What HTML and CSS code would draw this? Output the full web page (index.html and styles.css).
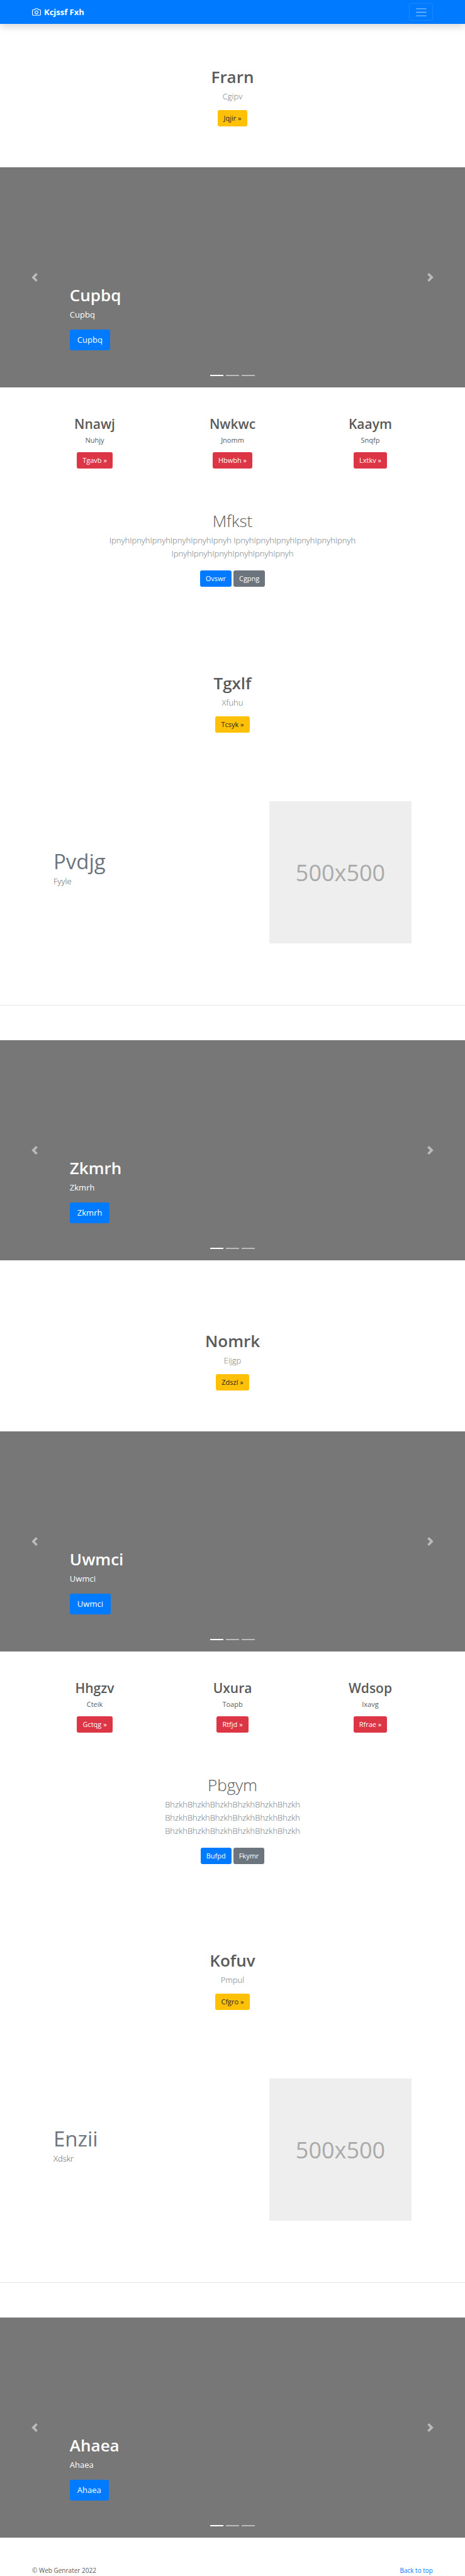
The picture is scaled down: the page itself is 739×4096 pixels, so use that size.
FILE: index.html
```html
<!DOCTYPE html>
<html lang="en">
<head>
<meta charset="utf-8">
<meta name="viewport" content="width=device-width, initial-scale=1">
<title>Kcjssf Fxh</title>
<link rel="stylesheet" href="styles.css">
</head>
<body>
<svg class="sprite" aria-hidden="true">
  <symbol id="chevron-left" viewBox="0 0 8 8"><path d="M5.25 0l-4 4 4 4 1.5-1.5L4.25 4l2.5-2.5L5.25 0z"/></symbol>
  <symbol id="chevron-right" viewBox="0 0 8 8"><path d="M2.75 0l-1.5 1.5L3.75 4l-2.5 2.5L2.75 8l4-4-4-4z"/></symbol>
</svg>

<header class="navbar" id="top">
  <div class="container navbar-inner">
    <a class="brand" href="#">
      <svg class="brand-icon" viewBox="0 0 24 24" aria-hidden="true"><path d="M23 19a2 2 0 0 1-2 2H3a2 2 0 0 1-2-2V8a2 2 0 0 1 2-2h4l2-3h6l2 3h4a2 2 0 0 1 2 2z"/><circle cx="12" cy="13" r="4"/></svg>
      <strong>Kcjssf Fxh</strong>
    </a>
    <button class="toggler" type="button" aria-label="Toggle navigation">
      <svg class="toggler-icon" viewBox="0 0 30 30" aria-hidden="true"><path d="M4 7h22M4 15h22M4 23h22"/></svg>
    </button>
  </div>
</header>

<main>
  <section class="hero">
    <h1 class="title">Frarn</h1>
    <p class="lead muted">Cgipv</p>
    <a class="btn btn-warning" href="#">Jqjir »</a>
  </section>

  <section class="carousel">
    <button class="control" type="button" aria-label="Previous"><svg><use href="#chevron-left"/></svg></button>
    <div class="caption">
      <h1 class="title">Cupbq</h1>
      <p class="lead">Cupbq</p>
      <a class="btn btn-lg btn-primary" href="#">Cupbq</a>
    </div>
    <button class="control" type="button" aria-label="Next"><svg><use href="#chevron-right"/></svg></button>
    <ol class="indicators"><li class="active"></li><li></li><li></li></ol>
  </section>

  <section class="container columns">
    <div class="column"><h2>Nnawj</h2><p>Nuhjy</p><a class="btn btn-danger" href="#">Tgavb »</a></div>
    <div class="column"><h2>Nwkwc</h2><p>Jnomm</p><a class="btn btn-danger" href="#">Hbwbh »</a></div>
    <div class="column"><h2>Kaaym</h2><p>Snqfp</p><a class="btn btn-danger" href="#">Lxtkv »</a></div>
  </section>

  <section class="intro">
    <h1 class="title light">Mfkst</h1>
    <p class="lead muted">IpnyhIpnyhIpnyhIpnyhIpnyhIpnyh IpnyhIpnyhIpnyhIpnyhIpnyhIpnyh IpnyhIpnyhIpnyhIpnyhIpnyhIpnyh</p>
    <div class="actions"><a class="btn btn-primary" href="#">Ovswr</a><a class="btn btn-secondary" href="#">Cgpng</a></div>
  </section>

  <section class="hero hero-middle">
    <h1 class="title">Tgxlf</h1>
    <p class="lead muted">Xfuhu</p>
    <a class="btn btn-warning" href="#">Tcsyk »</a>
  </section>

  <section class="container featurette">
    <div>
      <h2 class="featurette-heading">Pvdjg</h2>
      <p class="lead">Fyyle</p>
    </div>
    <div class="placeholder" role="img" aria-label="500x500">500x500</div>
  </section>
  <hr class="divider">

  <section class="carousel">
    <button class="control" type="button" aria-label="Previous"><svg><use href="#chevron-left"/></svg></button>
    <div class="caption">
      <h1 class="title">Zkmrh</h1>
      <p class="lead">Zkmrh</p>
      <a class="btn btn-lg btn-primary" href="#">Zkmrh</a>
    </div>
    <button class="control" type="button" aria-label="Next"><svg><use href="#chevron-right"/></svg></button>
    <ol class="indicators"><li class="active"></li><li></li><li></li></ol>
  </section>

  <section class="hero hero-lower">
    <h1 class="title">Nomrk</h1>
    <p class="lead muted">Eijgp</p>
    <a class="btn btn-warning" href="#">Zdszl »</a>
  </section>

  <section class="carousel">
    <button class="control" type="button" aria-label="Previous"><svg><use href="#chevron-left"/></svg></button>
    <div class="caption">
      <h1 class="title">Uwmci</h1>
      <p class="lead">Uwmci</p>
      <a class="btn btn-lg btn-primary" href="#">Uwmci</a>
    </div>
    <button class="control" type="button" aria-label="Next"><svg><use href="#chevron-right"/></svg></button>
    <ol class="indicators"><li class="active"></li><li></li><li></li></ol>
  </section>

  <section class="container columns">
    <div class="column"><h2>Hhgzv</h2><p>Cteik</p><a class="btn btn-danger" href="#">Gctqg »</a></div>
    <div class="column"><h2>Uxura</h2><p>Toapb</p><a class="btn btn-danger" href="#">Rtfjd »</a></div>
    <div class="column"><h2>Wdsop</h2><p>Ixavg</p><a class="btn btn-danger" href="#">Rfrae »</a></div>
  </section>

  <section class="intro">
    <h1 class="title light">Pbgym</h1>
    <p class="lead muted">BhzkhBhzkhBhzkhBhzkhBhzkhBhzkh BhzkhBhzkhBhzkhBhzkhBhzkhBhzkh BhzkhBhzkhBhzkhBhzkhBhzkhBhzkh</p>
    <div class="actions"><a class="btn btn-primary" href="#">Bufpd</a><a class="btn btn-secondary" href="#">Fkymr</a></div>
  </section>

  <section class="hero hero-middle">
    <h1 class="title">Kofuv</h1>
    <p class="lead muted">Pmpul</p>
    <a class="btn btn-warning" href="#">Cfgro »</a>
  </section>

  <section class="container featurette">
    <div>
      <h2 class="featurette-heading">Enzii</h2>
      <p class="lead">Xdskr</p>
    </div>
    <div class="placeholder" role="img" aria-label="500x500">500x500</div>
  </section>
  <hr class="divider">

  <section class="carousel">
    <button class="control" type="button" aria-label="Previous"><svg><use href="#chevron-left"/></svg></button>
    <div class="caption">
      <h1 class="title">Ahaea</h1>
      <p class="lead">Ahaea</p>
      <a class="btn btn-lg btn-primary" href="#">Ahaea</a>
    </div>
    <button class="control" type="button" aria-label="Next"><svg><use href="#chevron-right"/></svg></button>
    <ol class="indicators"><li class="active"></li><li></li><li></li></ol>
  </section>
</main>

<footer class="container footer">
  <p>© Web Genrater 2022</p>
  <a href="#top">Back to top</a>
</footer>
</body>
</html>
```
FILE: styles.css
```css
* { box-sizing: border-box; }

body {
  margin: 0;
  background: #fff;
  color: #5a5a5a;
  font-family: "Open Sans", "Noto Sans", sans-serif;
  font-size: 11px;
  font-weight: 400;
  line-height: 17px;
}

h1, h2, p { margin: 0; }
a { color: #007bff; text-decoration: none; }

.sprite { display: none; }

.container {
  width: 100%;
  max-width: 657px;
  margin: 0 auto;
  padding: 0 10px;
}

.navbar {
  background: #007bff;
  box-shadow: 0 5px 11px rgba(0, 0, 0, .15);
}
.navbar-inner {
  display: flex;
  align-items: center;
  justify-content: space-between;
  height: 38px;
}
.brand {
  display: flex;
  align-items: center;
  gap: 5px;
  color: #fff;
  font-size: 13px;
  line-height: 21px;
}
.brand strong { font-weight: 700; }
.brand-icon {
  width: 14px;
  height: 14px;
  fill: none;
  stroke: #fff;
  stroke-width: 2;
  stroke-linecap: round;
  stroke-linejoin: round;
}
.toggler {
  display: flex;
  align-items: center;
  justify-content: center;
  width: 38px;
  height: 28px;
  padding: 0;
  border: 1px solid rgba(255, 255, 255, .1);
  border-radius: 3px;
  background: transparent;
}
.toggler-icon {
  width: 21px;
  height: 21px;
  fill: none;
  stroke: rgba(255, 255, 255, .5);
  stroke-width: 2;
  stroke-linecap: round;
}

.title {
  margin-bottom: 5px;
  font-size: 26px;
  font-weight: 600;
  line-height: 32px;
}
.title.light { font-weight: 300; }
.lead {
  margin-bottom: 11px;
  font-size: 13px;
  font-weight: 300;
  line-height: 21px;
}
.muted { color: #6c757d; }

.btn {
  display: inline-block;
  padding: 4px 8px;
  border: 1px solid transparent;
  border-radius: 3px;
  color: #fff;
  font-size: 11px;
  font-weight: 400;
  line-height: 16px;
  vertical-align: top;
}
.btn-lg {
  padding: 5px 11px;
  font-size: 13px;
  line-height: 21px;
}
.btn-primary { background: #007bff; }
.btn-secondary { background: #6c757d; }
.btn-danger { background: #dc3545; }
.btn-warning { background: #ffc107; color: #212529; }

.hero {
  display: flex;
  flex-direction: column;
  align-items: center;
  padding: 68px 10px 65px;
  text-align: center;
}
.hero-middle { padding: 137px 10px 109px; }
.hero-lower { padding-top: 112px; }

.carousel {
  position: relative;
  display: grid;
  grid-template-columns: 15% 1fr 15%;
  height: 350px;
  background: #777;
  color: #fff;
}
.control {
  display: flex;
  align-items: center;
  justify-content: center;
  padding: 0;
  border: 0;
  background: transparent;
  opacity: .5;
}
.control svg {
  width: 14px;
  height: 14px;
  fill: #fff;
}
.caption {
  align-self: end;
  padding-bottom: 59px;
}
.caption .lead {
  margin-bottom: 13px;
  font-weight: 400;
}
.indicators {
  position: absolute;
  right: 0;
  bottom: 18px;
  left: 0;
  display: flex;
  justify-content: center;
  gap: 4px;
  margin: 0;
  padding: 0;
  list-style: none;
}
.indicators li {
  width: 21px;
  height: 2px;
  background: #fff;
  opacity: .5;
}
.indicators .active { opacity: 1; }

.columns {
  display: grid;
  grid-template-columns: repeat(3, 1fr);
  padding: 45px 0 67px;
}
.column { text-align: center; }
.column h2 {
  margin-bottom: 5px;
  font-size: 21px;
  font-weight: 600;
  line-height: 26px;
}
.column p {
  margin-bottom: 11px;
  line-height: 16px;
}

.intro {
  max-width: 400px;
  margin: 0 auto;
  text-align: center;
}
.intro .lead { margin-bottom: 16px; }
.actions {
  display: flex;
  justify-content: center;
  gap: 3px;
}

.featurette {
  display: flex;
  align-items: center;
  justify-content: space-between;
  padding: 0 44px;
}
.featurette-heading {
  margin-bottom: 3px;
  color: #6c757d;
  font-size: 33px;
  font-weight: 400;
  line-height: 36px;
}
.placeholder {
  display: flex;
  align-items: center;
  justify-content: center;
  width: 226px;
  aspect-ratio: 1;
  background: #eee;
  color: #aaa;
  font-size: 36px;
  font-weight: 400;
}
.divider {
  margin: 98px 0 55px;
  border: 0;
  border-top: 1px solid #e6e6e6;
}

.footer {
  display: flex;
  justify-content: space-between;
  padding-top: 44px;
  font-size: 10px;
}
```
